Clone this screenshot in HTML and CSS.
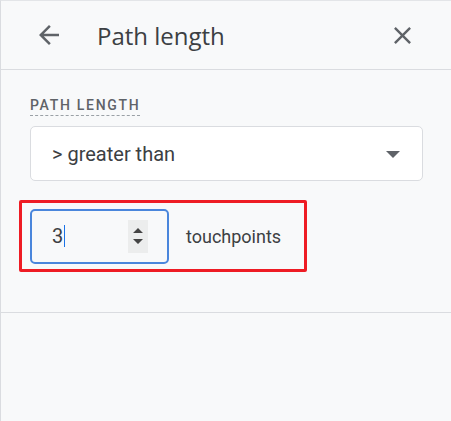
FILE: index.html
```html
<!DOCTYPE html>
<html lang="en">
  <head>
    <meta charset="UTF-8" />
    <title>Path length</title>
    <link rel="stylesheet" href="styles.css">
  </head>
  <body>
    <div class="panel">
      <header class="panelHead">
        <button class="iconBtn back" aria-label="Back">
          <svg width="30" height="30" viewBox="0 0 24 24"><path d="M20 11H7.83l5.59-5.59L12 4l-8 8 8 8 1.41-1.41L7.83 13H20v-2z" fill="#5f6368"/></svg>
        </button>
        <h1 class="title">Path length</h1>
        <button class="iconBtn close" aria-label="Close">
          <svg width="29" height="29" viewBox="0 0 24 24"><path d="M19 6.41L17.59 5 12 10.59 6.41 5 5 6.41 10.59 12 5 17.59 6.41 19 12 13.41 17.59 19 19 17.59 13.41 12z" fill="#5f6368"/></svg>
        </button>
      </header>
      <section class="body">
        <div class="fieldLabel"><span>PATH LENGTH</span></div>
        <div class="select">
          <span>&gt; greater than</span>
          <span class="caret"></span>
        </div>
        <div class="highlight">
          <div class="numBox">
            <span class="val">3</span><span class="cursor"></span>
            <span class="spin">
              <svg width="12" height="24" viewBox="0 0 12 24"><path d="M1 9l5-5 5 5z M1 15l5 5 5-5z" fill="#444"/></svg>
            </span>
          </div>
          <span class="unit">touchpoints</span>
        </div>
      </section>
      <div class="rest"></div>
    </div>
  </body>
</html>
```

FILE: styles.css
```css
html, body {
  margin: 0;
  height: 100%;
  background: #f8f9fa;
  font-family: Roboto, 'Liberation Sans', sans-serif;
}
.panel {
  height: 100%;
  box-sizing: border-box;
  border-left: 1px solid #dadce0;
  border-top: 1px solid #e3e5e8;
}
.panelHead {
  display: flex;
  align-items: center;
  height: 68px;
  border-bottom: 1px solid #dadce0;
}
.iconBtn {
  background: none;
  border: none;
  padding: 0;
  display: flex;
}
.back {
  margin-left: 33px;
}
.title {
  flex: 1;
  margin: 0 0 0 33px;
  font-size: 24px;
  font-weight: 400;
  color: #3c4043;
  font-family: 'Open Sans', Roboto, sans-serif;
}
.close {
  margin-right: 34px;
}
.body {
  padding: 25px 28px 40px 29px;
  border-bottom: 1px solid #dadce0;
}
.fieldLabel span {
  display: inline-block;
  font-size: 14px;
  font-weight: 500;
  letter-spacing: 1.7px;
  color: #5f6368;
  line-height: 16px;
  padding-bottom: 2px;
  border-bottom: 1px dashed #9aa0a6;
}
.select {
  margin-top: 10px;
  height: 53px;
  background: #fff;
  border: 1px solid #dadce0;
  border-radius: 5px;
  display: flex;
  align-items: center;
  justify-content: space-between;
  padding: 0 22px 0 21px;
  font-size: 20px;
  color: #3c4043;
}
.caret {
  width: 0;
  height: 0;
  border-left: 7px solid transparent;
  border-right: 7px solid transparent;
  border-top: 7px solid #5f6368;
  margin-top: 2px;
}
.highlight {
  margin: 19px 0 0 -11px;
  width: 274px;
  height: 66px;
  border: 3px solid #ee1c24;
  border-radius: 2px;
  display: flex;
  align-items: center;
  padding-left: 8px;
}
.numBox {
  box-sizing: border-box;
  width: 139px;
  height: 55px;
  border: 2px solid #4a86dc;
  border-radius: 5px;
  background: #f8f9fa;
  display: flex;
  align-items: center;
  padding-left: 20px;
  font-size: 20px;
  color: #3c4043;
}
.cursor {
  width: 1px;
  height: 22px;
  background: #1a73e8;
  margin-left: 1px;
}
.spin {
  margin-left: auto;
  margin-right: 19px;
  width: 20px;
  height: 33px;
  background: #eceded;
  display: flex;
  align-items: center;
  justify-content: center;
}
.unit {
  margin-left: 17px;
  font-size: 18px;
  color: #3c4043;
}
```
